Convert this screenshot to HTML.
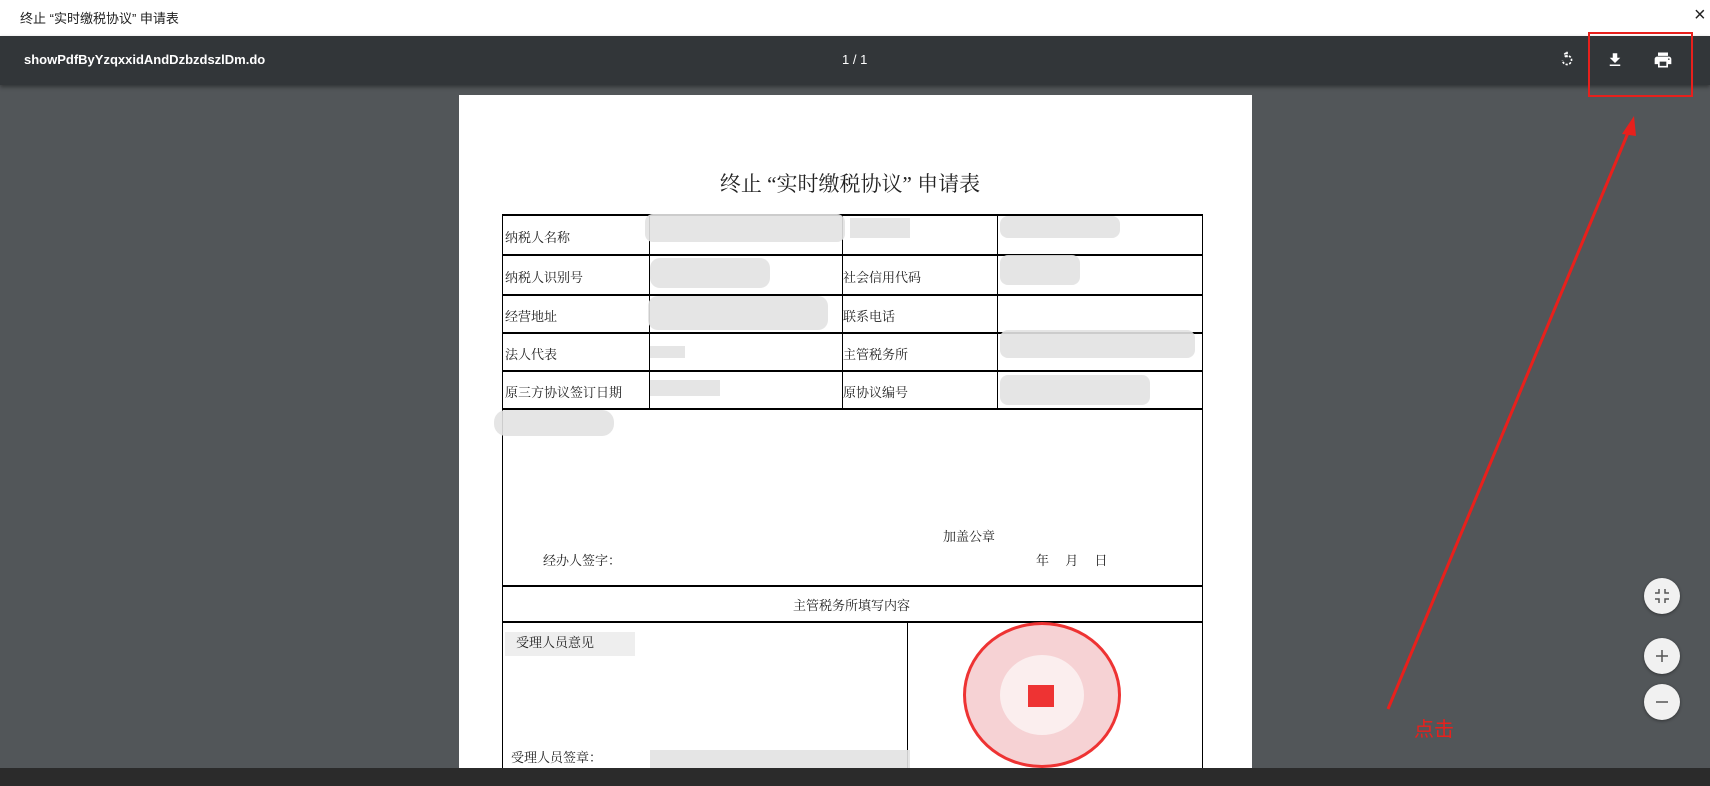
<!DOCTYPE html>
<html><head><meta charset="utf-8"><style>
*{margin:0;padding:0;box-sizing:border-box}
body{width:1710px;height:786px;overflow:hidden;position:relative;background:#525659;font-family:"Liberation Sans","Noto Sans CJK SC",sans-serif}
.a{position:absolute}
.top{left:0;top:0;width:1710px;height:36px;background:#fff}
.tb{left:0;top:36px;width:1710px;height:49px;background:#323639;box-shadow:0 2px 4px rgba(0,0,0,.4)}
.page{left:459px;top:95px;width:793px;height:690px;background:#fff}
.s{font-family:"Liberation Serif","Noto Serif CJK SC",serif;font-size:13px;color:#222;position:absolute;white-space:nowrap;z-index:2}
.h{background:#000;position:absolute;height:2px}
.v{background:#000;position:absolute;width:1px}
.b{position:absolute;background:#e2e2e2;opacity:.9}
.btn{position:absolute;width:36px;height:36px;border-radius:50%;background:#f1f1f1;box-shadow:0 1px 3px rgba(0,0,0,.4);left:1644px}
.bot{left:0;top:768px;width:1710px;height:18px;background:#2b2b2b}
</style></head><body>
<div class="a top"></div>
<div class="a" style="left:20px;top:8px;font-size:13px;color:#222">终止 “实时缴税协议” 申请表</div>
<div class="a" style="left:1694px;top:4px;font-size:20px;color:#222">×</div>
<div class="a tb"></div>
<div class="a" style="left:24px;top:52px;color:#fff;font-size:13px;font-weight:bold">showPdfByYzqxxidAndDzbzdszlDm.do</div>
<div class="a" style="left:842px;top:52px;color:#fff;font-size:13px">1 / 1</div>
<svg class="a" style="left:1558px;top:51px" width="18" height="18" viewBox="0 0 24 24"><path d="M12 4V1L8 5l4 4V6a6 6 0 1 1-6 6" fill="none" stroke="#fff" stroke-width="2.2" stroke-dasharray="3 2"/></svg>
<svg class="a" style="left:1606px;top:51px" width="18" height="18" viewBox="0 0 24 24"><path d="M19 9h-4V3H9v6H5l7 7 7-7zM5 18v2h14v-2z" fill="#fff"/></svg>
<svg class="a" style="left:1653px;top:50px" width="20" height="20" viewBox="0 0 24 24"><path d="M19 8H5c-1.66 0-3 1.34-3 3v6h4v4h12v-4h4v-6c0-1.66-1.34-3-3-3zm-3 11H8v-5h8v5zm3-7c-.55 0-1-.45-1-1s.45-1 1-1 1 .45 1 1-.45 1-1 1zm-1-9H6v4h12V3z" fill="#fff"/></svg>
<div class="a" style="left:1588px;top:32px;width:105px;height:65px;border:2px solid #e8201c"></div>
<div class="a page"></div>
<div class="s" style="left:0;width:1710px;text-align:center;top:168px;font-size:21px"><span style="position:relative;left:-5px">终止 “实时缴税协议” 申请表</span></div>
<div class="h" style="left:502px;top:214px;width:701px"></div>
<div class="h" style="left:502px;top:254px;width:701px"></div>
<div class="h" style="left:502px;top:294px;width:701px"></div>
<div class="h" style="left:502px;top:332px;width:701px"></div>
<div class="h" style="left:502px;top:370px;width:701px"></div>
<div class="h" style="left:502px;top:408px;width:701px"></div>
<div class="h" style="left:502px;top:585px;width:701px"></div>
<div class="h" style="left:502px;top:621px;width:701px"></div>
<div class="v" style="left:502px;top:214px;height:554px"></div>
<div class="v" style="left:1202px;top:214px;height:554px"></div>
<div class="v" style="left:649px;top:214px;height:195px"></div>
<div class="v" style="left:842px;top:214px;height:195px"></div>
<div class="v" style="left:997px;top:214px;height:195px"></div>
<div class="v" style="left:907px;top:621px;height:147px"></div>
<div class="b" style="left:645px;top:214px;width:200px;height:28px;border-radius:8px"></div>
<div class="b" style="left:650px;top:258px;width:120px;height:30px;border-radius:10px"></div>
<div class="b" style="left:648px;top:296px;width:180px;height:34px;border-radius:10px"></div>
<div class="b" style="left:850px;top:218px;width:60px;height:20px"></div>
<div class="b" style="left:1000px;top:216px;width:120px;height:22px;border-radius:8px"></div>
<div class="b" style="left:1000px;top:255px;width:80px;height:30px;border-radius:8px"></div>
<div class="b" style="left:1000px;top:330px;width:195px;height:28px;border-radius:8px"></div>
<div class="b" style="left:1000px;top:375px;width:150px;height:30px;border-radius:8px"></div>
<div class="b" style="left:650px;top:346px;width:35px;height:12px"></div>
<div class="b" style="left:650px;top:380px;width:70px;height:16px"></div>
<div class="b" style="left:494px;top:410px;width:120px;height:26px;border-radius:12px"></div>
<div class="b" style="left:505px;top:632px;width:130px;height:24px;opacity:.6"></div>
<div class="b" style="left:650px;top:750px;width:260px;height:18px"></div>
<div class="s" style="left:505px;top:227px">纳税人名称</div>
<div class="s" style="left:505px;top:267px">纳税人识别号</div>
<div class="s" style="left:505px;top:306px">经营地址</div>
<div class="s" style="left:505px;top:344px">法人代表</div>
<div class="s" style="left:505px;top:382px">原三方协议签订日期</div>
<div class="s" style="left:843px;top:267px">社会信用代码</div>
<div class="s" style="left:843px;top:306px">联系电话</div>
<div class="s" style="left:843px;top:344px">主管税务所</div>
<div class="s" style="left:843px;top:382px">原协议编号</div>
<div class="s" style="left:943px;top:526px">加盖公章</div>
<div class="s" style="left:543px;top:550px">经办人签字：</div>
<div class="s" style="left:1036px;top:550px">年&nbsp;&nbsp;&nbsp;&nbsp;&nbsp;月&nbsp;&nbsp;&nbsp;&nbsp;&nbsp;日</div>
<div class="s" style="left:793px;top:595px">主管税务所填写内容</div>
<div class="s" style="left:516px;top:632px">受理人员意见</div>
<div class="s" style="left:511px;top:747px">受理人员签章：</div>
<div class="a" style="left:963px;top:622px;width:158px;height:146px;border-radius:50%;border:3px solid #e33;background:#f6d2d4"></div>
<div class="a" style="left:1000px;top:655px;width:84px;height:80px;border-radius:50%;background:#fbeeee"></div>
<div class="a" style="left:1028px;top:685px;width:26px;height:22px;background:#e33"></div>
<svg class="a" style="left:0;top:0" width="1710" height="786"><line x1="1388" y1="709" x2="1630" y2="128" stroke="#e8201c" stroke-width="3"/><polygon points="1634,116 1622,134 1636,136" fill="#e8201c"/></svg>
<div class="a" style="left:1414px;top:713px;color:#e8201c;font-size:20px">点击</div>
<div class="btn" style="top:578px"><svg width="36" height="36" viewBox="0 0 36 36"><path d="M15 11v4h-4M21 11v4h4M15 25v-4h-4M21 25v-4h4" fill="none" stroke="#555" stroke-width="1.5"/></svg></div>
<div class="btn" style="top:638px"><svg width="36" height="36" viewBox="0 0 36 36"><path d="M18 12v12M12 18h12" stroke="#555" stroke-width="1.5"/></svg></div>
<div class="btn" style="top:684px"><svg width="36" height="36" viewBox="0 0 36 36"><path d="M12 18h12" stroke="#555" stroke-width="1.5"/></svg></div>
<div class="a bot"></div>
</body></html>
